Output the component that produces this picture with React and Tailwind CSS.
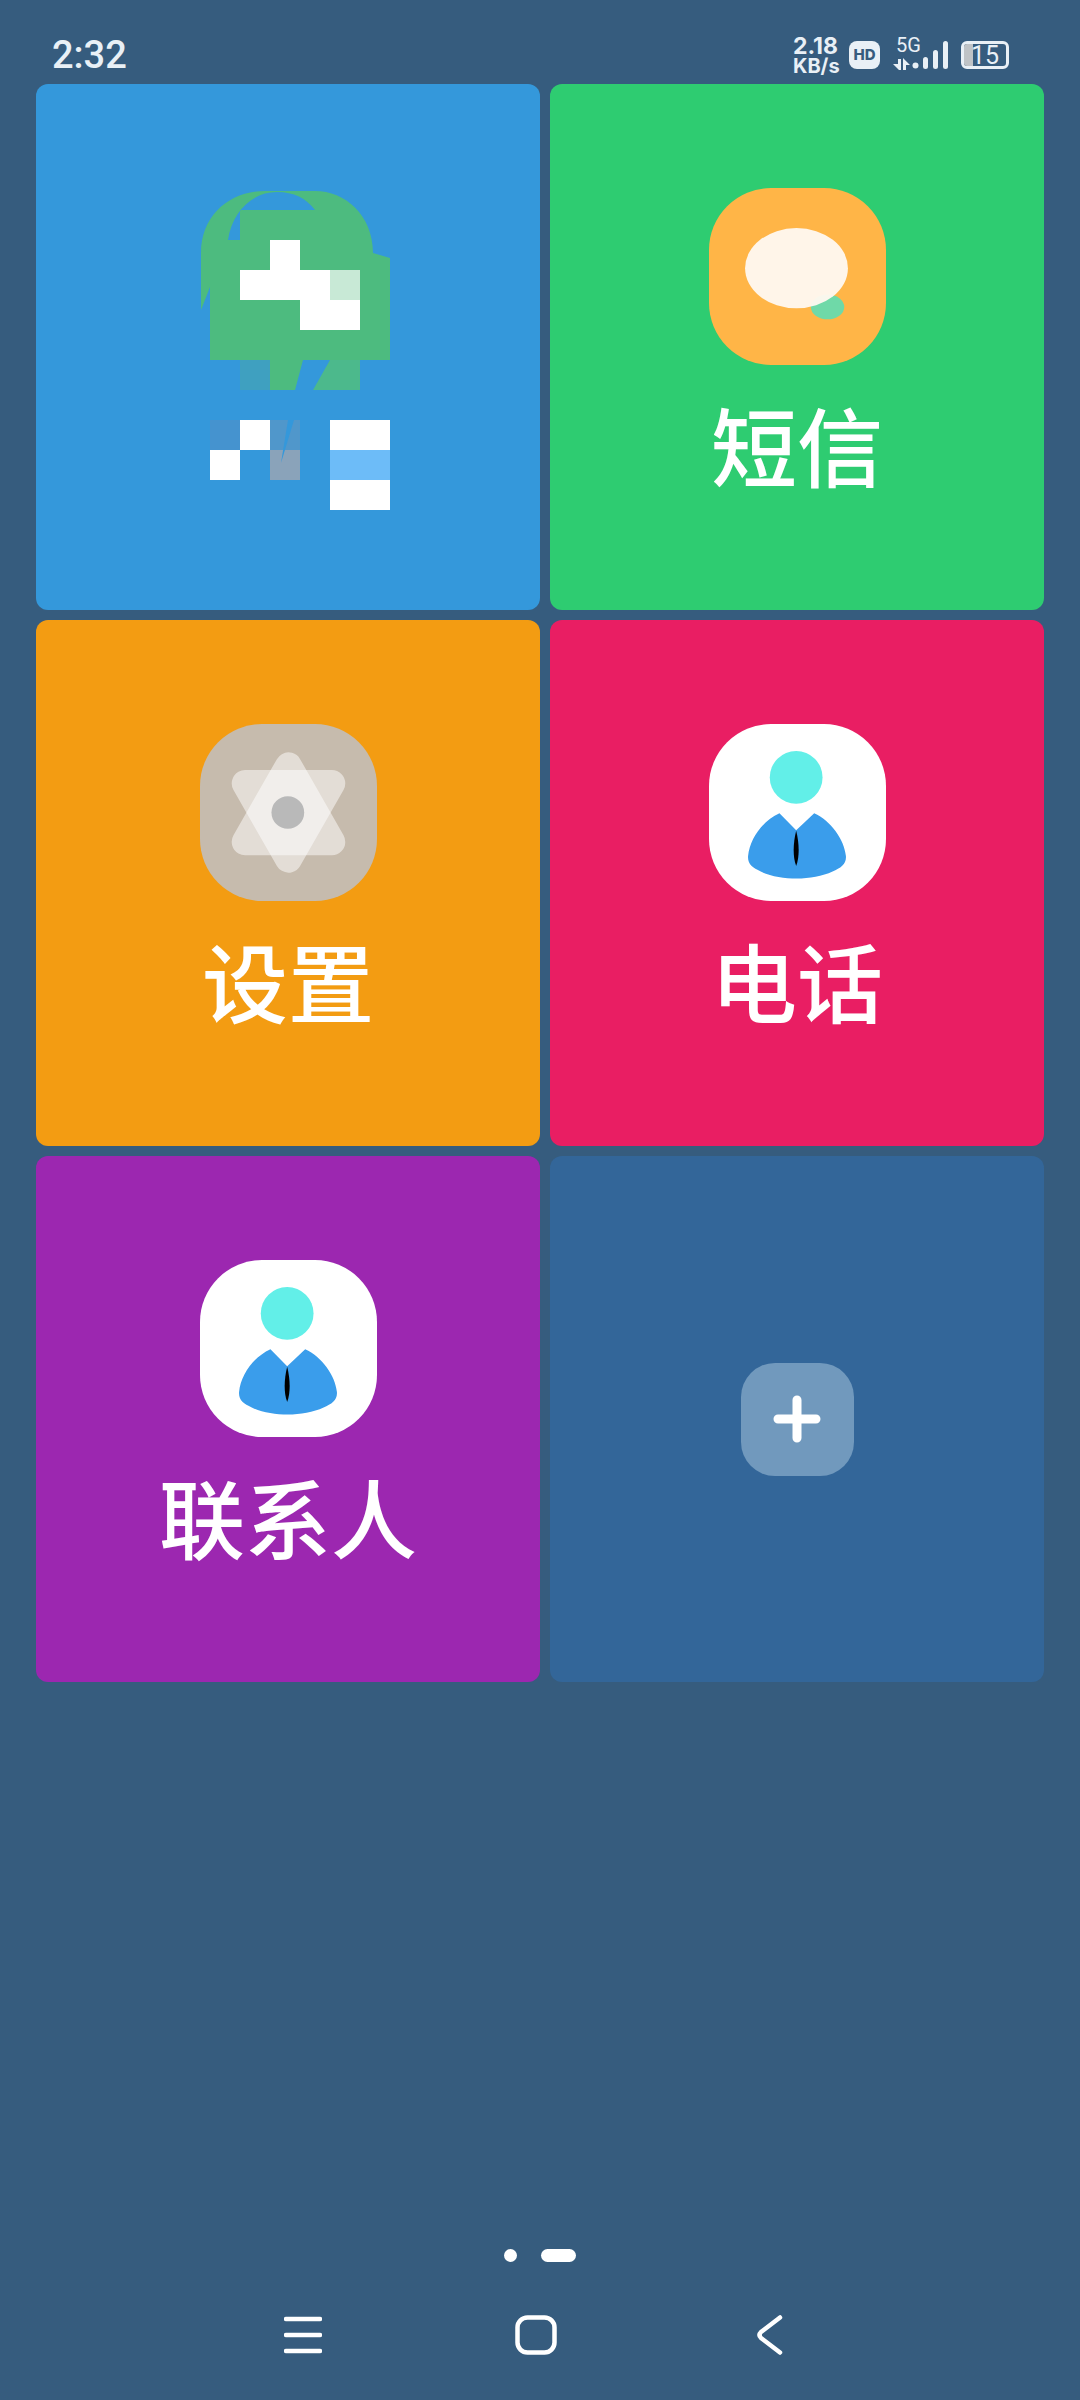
import React from "react";

const Person = () => (
  <svg viewBox="0 0 530 530" className="w-full h-full">
    <circle cx="261" cy="160" r="79" fill="#62EFE8" />
    <path
      d="M211 267 L261 318 L315 267 C365 290 405 345 410 395 C412 420 395 430 370 442 C340 456 300 463 263 463 C225 463 185 456 155 442 C130 430 115 420 117 395 C122 345 160 290 211 267 Z"
      fill="#3A9DEB"
    />
    <path d="M261 320 C271 360 271 400 261 425 C251 400 251 360 261 320 Z" fill="#000" />
  </svg>
);

const Message = () => (
  <svg viewBox="0 0 530 530" className="w-full h-full">
    <ellipse cx="355" cy="356" rx="50" ry="37" fill="#6FD9A8" />
    <ellipse cx="262" cy="240" rx="154" ry="120" fill="#FFF8EF" fillOpacity="0.96" />
  </svg>
);

const Gear = () => (
  <svg viewBox="0 0 530 530" className="w-full h-full">
    <path d="M265 125 L135 353 L395 353 Z" fill="#fff" stroke="#fff" strokeWidth="80" strokeLinejoin="round" opacity="0.5" />
    <path d="M265 405 L135 178 L395 178 Z" fill="#fff" stroke="#fff" strokeWidth="80" strokeLinejoin="round" opacity="0.5" />
    <circle cx="263" cy="265" r="49" fill="#B9B9B9" />
  </svg>
);

// the first app's icon and label are pixelated in the screenshot
const Mosaic = () => (
  <svg viewBox="168 187 240 330" className="w-[240px] h-[330px]">
    <path
      d="M201 310 L201 253 C201 215 230 191 265 191 L315 191 C345 191 373 215 373 253 L390 258 L390 360 L210 360 L210 287 Z"
      fill="#4DBB7F"
    />
    <path d="M228 240 C232 212 252 192 277 192 C294 192 306 198 315 210 L240 210 L240 240 Z" fill="#3498DB" />
    <rect x="240" y="360" width="30" height="30" fill="#3FA0C0" />
    <path d="M270 360 L303 360 L295 390 L270 390 Z" fill="#4DBB7F" />
    <path d="M330 360 L360 360 L360 390 L313 390 Z" fill="#4CB98C" />
    <rect x="270" y="240" width="30" height="30" fill="#fff" />
    <rect x="240" y="270" width="90" height="30" fill="#fff" />
    <rect x="330" y="270" width="30" height="30" fill="#C8E9D6" />
    <rect x="300" y="300" width="60" height="30" fill="#fff" />
    <rect x="210" y="420" width="30" height="30" fill="#4593CF" />
    <rect x="240" y="420" width="30" height="30" fill="#fff" />
    <rect x="210" y="450" width="30" height="30" fill="#fff" />
    <rect x="270" y="420" width="30" height="30" fill="#5097CB" />
    <rect x="270" y="450" width="30" height="30" fill="#8AA3BA" />
    <path d="M288 420 L294 420 L281 463 Z" fill="#3498DB" />
    <rect x="330" y="420" width="60" height="30" fill="#fff" />
    <rect x="330" y="450" width="60" height="30" fill="#6DBCF8" />
    <rect x="330" y="480" width="60" height="30" fill="#fff" />
  </svg>
);

const AppCard = ({ color, iconBg, label, children }) => (
  <div className={`h-[526px] rounded-[12px] flex flex-col items-center pt-[104px] ${color}`}>
    <div className={`w-[177px] h-[177px] rounded-[62px] overflow-hidden ${iconBg}`}>{children}</div>
    <div className="mt-[20px] text-[86px] leading-[118px] font-medium text-white">{label}</div>
  </div>
);

const StatusBar = () => (
  <div className="h-[84px] flex items-start pl-[52px] pr-[71px] text-[#E9F0F6]">
    <div className="mt-[31px] text-[38px] leading-[48px] font-medium font-['Roboto',sans-serif]">2:32</div>
    <div className="ml-auto mt-[36px] flex items-start">
      <div className="w-[48px] font-['Inter',sans-serif] font-bold">
        <div className="text-[23px] leading-[20px]">2.18</div>
        <div className="text-[20px] leading-[20px]">KB/s</div>
      </div>
      <div className="ml-[8px] mt-[5px] w-[31px] h-[28px] rounded-[8px] bg-[#E9F0F6] flex items-center justify-center text-[#365C7E] text-[15px] font-extrabold font-['Inter',sans-serif]">
        HD
      </div>
      <div className="relative ml-[13px] mt-[5px] w-[56px] h-[30px]">
        <div className="absolute left-[3px] -top-[6px] text-[20px] leading-[20px] font-['Roboto',sans-serif]">5G</div>
        <svg viewBox="0 0 56 30" className="w-[56px] h-[30px]" fill="#E9F0F6">
          <path d="M0 23 L5 23 L5 18 L8 18 L8 29 L6 29 Z" />
          <path d="M10 29 L13 29 L13 24 L17 24 L10 17 Z" />
          <circle cx="22.5" cy="24.5" r="3" />
          <rect x="30" y="16" width="5" height="12" rx="2.5" />
          <rect x="40" y="9" width="5" height="19" rx="2.5" />
          <rect x="50" y="0" width="5" height="28" rx="2.5" />
        </svg>
      </div>
      <div className="ml-[12px] mt-[5px] relative w-[48px] h-[28px] rounded-[6px] border-[3px] border-[#E9F0F6] overflow-hidden">
        <div className="w-[9px] h-full bg-[#BFC3C6]" />
        <div className="absolute left-[7px] top-0 h-full flex items-center text-[25px] leading-none font-['Roboto',sans-serif]">15</div>
      </div>
    </div>
  </div>
);

export default function App() {
  return (
    <div className="w-[1080px] h-[2400px] bg-[#365C7E] flex flex-col font-['Noto_Sans_CJK_SC','Noto_Sans',sans-serif]">
      <StatusBar />

      <div className="pl-[36px] pr-[36px] grid grid-cols-[504px_494px] gap-[10px]">
        <div className="h-[526px] rounded-[12px] bg-[#3498DB] flex flex-col items-center pt-[103px]">
          <Mosaic />
        </div>
        <AppCard color="bg-[#2ECC71]" iconBg="bg-[#FFB547]" label="短信">
          <Message />
        </AppCard>
        <AppCard color="bg-[#F39C12]" iconBg="bg-[#C6BBAD]" label="设置">
          <Gear />
        </AppCard>
        <AppCard color="bg-[#E91E63]" iconBg="bg-white" label="电话">
          <Person />
        </AppCard>
        <AppCard color="bg-[#9C27B0]" iconBg="bg-white" label="联系人">
          <Person />
        </AppCard>
        <div className="h-[526px] rounded-[12px] bg-[#336699] flex items-center justify-center">
          <div className="w-[113px] h-[113px] rounded-[34px] bg-[#7199BD] flex items-center justify-center">
            <svg viewBox="0 0 50 50" className="w-[50px] h-[50px]" stroke="#fff" strokeWidth="9" strokeLinecap="round">
              <path d="M6 25 H44 M25 6 V44" />
            </svg>
          </div>
        </div>
      </div>

      <div className="mt-auto flex justify-center items-center gap-[24px]">
        <div className="w-[13px] h-[13px] rounded-full bg-white" />
        <div className="w-[35px] h-[13px] rounded-full bg-white" />
      </div>

      <div className="mt-[53px] mb-[45px] h-[40px] flex items-center pl-[284px]">
        <svg viewBox="0 0 38 40" className="w-[38px] h-[40px]" stroke="#fff" strokeWidth="4.5" strokeLinecap="round">
          <path d="M2 4 H36 M2 20 H36 M2 36 H36" />
        </svg>
        <svg viewBox="0 0 42 40" className="ml-[193px] w-[42px] h-[40px]" fill="none" stroke="#fff" strokeWidth="4.5">
          <rect x="2.5" y="2.5" width="37" height="35" rx="10" />
        </svg>
        <svg viewBox="0 0 26 40" className="ml-[200px] w-[26px] h-[40px]" fill="none" stroke="#fff" strokeWidth="4.5" strokeLinecap="round" strokeLinejoin="round">
          <path d="M23 2.5 L4 17 Q1 20 4 23 L23 37.5" />
        </svg>
      </div>
    </div>
  );
}
